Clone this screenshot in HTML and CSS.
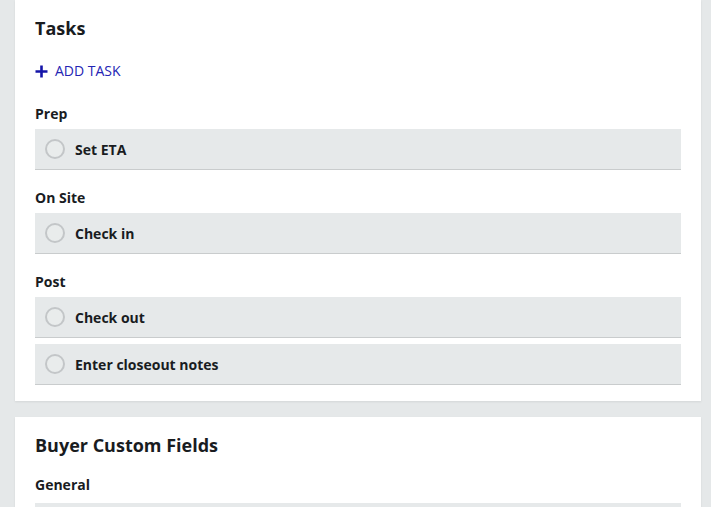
FILE: index.html
```html
<!DOCTYPE html>
<html lang="en">
<head>
<meta charset="utf-8">
<title>Tasks</title>
<link rel="stylesheet" href="styles.css">
</head>
<body>
<main class="page">
  <section class="card">
    <h2 class="card-title">Tasks</h2>
    <button class="add-btn" type="button">
      <svg class="plus" width="13" height="13" viewBox="0 0 13 13" aria-hidden="true"><path d="M6.5 0.5v12M0.5 6.5h12" stroke="currentColor" stroke-width="2.6"/></svg>
      <span>ADD TASK</span>
    </button>
    <div class="group">
      <h3 class="group-label">Prep</h3>
      <div class="row"><span class="check"></span><span class="row-text">Set ETA</span></div>
    </div>
    <div class="group">
      <h3 class="group-label">On Site</h3>
      <div class="row"><span class="check"></span><span class="row-text">Check in</span></div>
    </div>
    <div class="group">
      <h3 class="group-label">Post</h3>
      <div class="row"><span class="check"></span><span class="row-text">Check out</span></div>
      <div class="row"><span class="check"></span><span class="row-text">Enter closeout notes</span></div>
    </div>
  </section>
  <section class="card">
    <h2 class="card-title">Buyer Custom Fields</h2>
    <div class="group fields">
      <h3 class="group-label">General</h3>
      <div class="row"></div>
    </div>
  </section>
</main>
</body>
</html>
```
FILE: styles.css
```css
html, body {
  margin: 0;
  padding: 0;
  background: #e5e8e9;
  font-family: "Open Sans", "Liberation Sans", sans-serif;
  color: #191c1f;
}
.page {
  display: flex;
  flex-direction: column;
  gap: 16px;
  padding: 0 10px 0 15px;
}
.card {
  background: #ffffff;
  padding: 16px 20px 16px;
  box-shadow: 0 1px 2px rgba(0, 0, 0, 0.08);
}
.card-title {
  margin: 0;
  font-size: 18px;
  line-height: 24px;
  font-weight: 700;
}
.add-btn {
  display: flex;
  align-items: center;
  gap: 7px;
  margin-top: 21px;
  padding: 0;
  border: 0;
  background: none;
  font-family: inherit;
  font-size: 14px;
  line-height: 20px;
  color: #2424b4;
  cursor: pointer;
}
.plus {
  color: #1414a8;
  display: block;
}
.group {
  display: flex;
  flex-direction: column;
  gap: 6px;
  margin-top: 19px;
}
.add-btn + .group {
  margin-top: 24px;
}
.group.fields {
  gap: 9px;
}
.group-label {
  margin: 0;
  font-size: 14px;
  line-height: 18px;
  font-weight: 700;
}
.row {
  display: flex;
  align-items: center;
  gap: 10px;
  height: 40px;
  padding: 0 10px;
  background: #e6e9ea;
  border-bottom: 1px solid #c9cccd;
}
.check {
  width: 16px;
  height: 16px;
  border: 2px solid #c3c6c8;
  border-radius: 50%;
  background: #e9ecec;
  flex: none;
}
.row-text {
  font-size: 14px;
  font-weight: 700;
}
```
